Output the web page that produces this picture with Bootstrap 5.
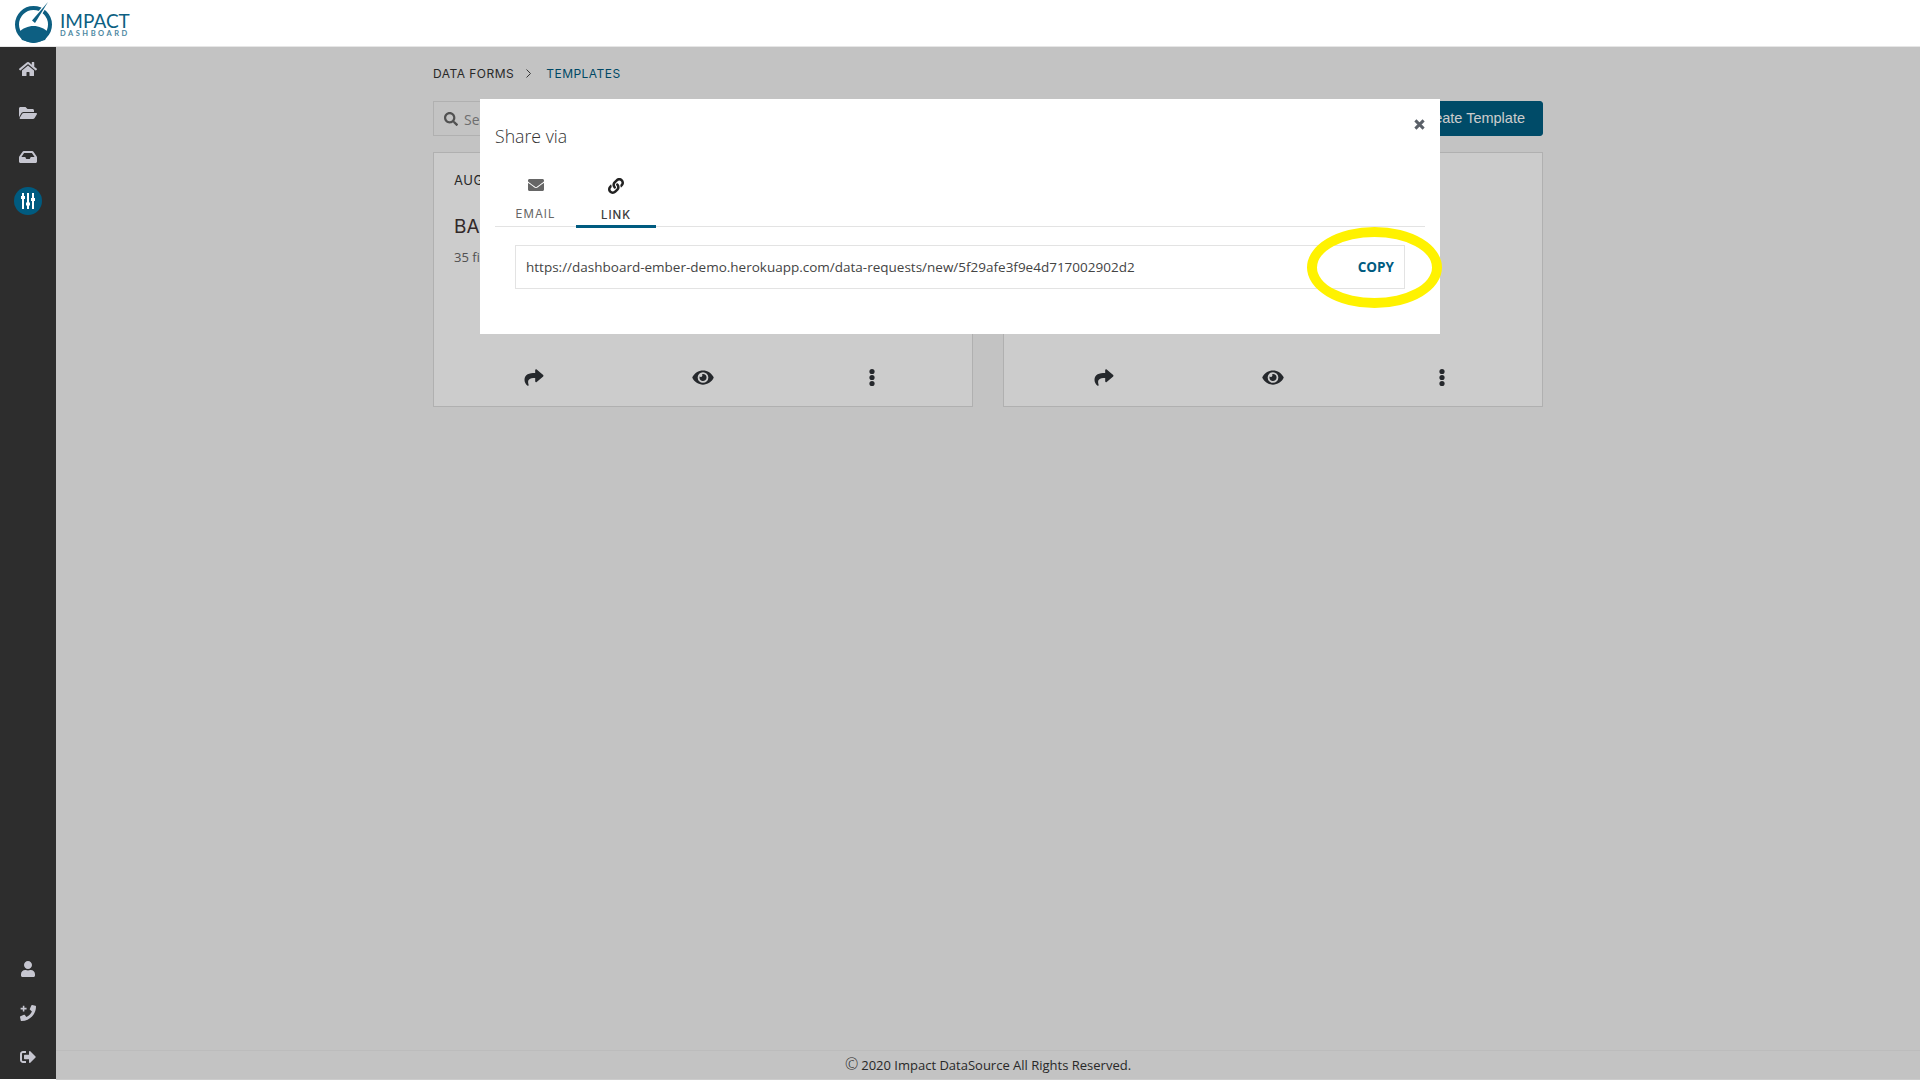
<!DOCTYPE html>
<html lang="en">
<head>
  <meta charset="UTF-8" />
  <title>Impact Dashboard</title>
  <link href="https://cdn.jsdelivr.net/npm/bootstrap@5.3.0/dist/css/bootstrap.min.css" rel="stylesheet" />
  <style>
    html, body { height: 100%; }
    body {
      background: #fff;
      font-family: "Open Sans", sans-serif;
      overflow: hidden;
    }
    .page-wrap { height: 1079px; }

    /* top bar */
    .top-bar {
      height: 47px;
      background: #fff;
      border-bottom: 1px solid #e6e6e6;
      padding-left: 14px;
    }
    .logo-mark { display: block; }
    .logo-name {
      font-family: Lato, sans-serif;
      color: #0d5f82;
      margin-left: 6px;
      margin-top: 3px;
    }
    .logo-big { font-size: 19px; line-height: 17px; }
    .logo-small { font-size: 7.5px; line-height: 9px; font-weight: 700; letter-spacing: 2.5px; color: #4c87a1; }

    /* side bar */
    .side-bar { width: 56px; background: #2d2d2d; }
    .side-link {
      width: 28px;
      height: 28px;
      margin-top: 8px;
      margin-bottom: 8px;
      color: #c6c6d0;
    }
    .side-link svg { width: 18px; height: 16px; fill: currentColor; }
    .side-link.is-on { background: #005b80; color: #fff; border-radius: 50%; }

    /* main area under the backdrop */
    .main-area { background: #f4f4f4; min-width: 0; }
    .main-inner { max-width: 1140px; padding: 0 15px; }
    .crumbs {
      font-family: Inter, sans-serif;
      font-size: 12px;
      letter-spacing: .48px;
      color: #333;
      height: 54px;
      padding-top: 18px;
    }
    .crumbs .crumb-on { color: #005b80; }
    .crumb-sep { width: 5px; height: 9px; margin: 0 15px 0 12px; }
    .search-box {
      width: 300px;
      height: 35px;
      border: 1px solid #dcdcdc;
      background: #f4f4f4;
      font-size: 14px;
      color: #8a8a8a;
      padding: 1px 0 0 10px;
    }
    .search-box svg { width: 14px; height: 14px; fill: #666; margin-right: 6px; }
    .btn-create {
      background: #005e83;
      border-color: #005e83;
      color: #fff;
      font-family: "Liberation Sans", sans-serif;
      font-size: 14.5px;
      height: 35px;
      width: 210px;
      padding: 0 17px 0 0;
      text-align: right;
      border-radius: 3px;
    }
    .tpl-row { gap: 30px; margin-top: 16px; }
    .tpl-card {
      width: 540px;
      height: 255px;
      background: #fff;
      border: 1px solid #dcdcdc;
      border-radius: 0;
      padding: 16px 20px 0;
      color: #333;
    }
    .tpl-date { font-family: Inter, sans-serif; font-size: 13px; font-weight: 400; letter-spacing: .6px; height: 44px; padding-top: 2px; }
    .tpl-name { font-family: Inter, sans-serif; font-size: 19px; font-weight: 400; color: #403434; }
    .tpl-count { font-size: 13px; color: #666; margin-top: 6px; }
    .tpl-actions { height: 50px; padding-bottom: 7px; margin: 0 -5px; }
    .tpl-actions span { width: 169px; display: flex; justify-content: center; }
    .tpl-actions svg { height: 19px; width: 22px; fill: #2f3237; }

    .site-foot {
      height: 29px;
      border-top: 1px solid #ebebeb;
      font-size: 13px;
      color: #333;
      padding-top: 2px;
    }
    .copy-mark { font-size: 16px; font-weight: 300; line-height: 1; margin-right: 3px; }

    /* dimmed layer and dialog */
    .dim-layer {
      position: absolute;
      top: 47px;
      left: 56px;
      right: 0;
      bottom: 0;
      background: rgba(0, 0, 0, .2);
    }
    .share-box {
      position: absolute;
      top: 99px;
      left: 480px;
      width: 960px;
      height: 235px;
      background: #fff;
      padding: 0 15px;
    }
    .share-title {
      font-size: 17.7px;
      font-weight: 300;
      color: #333;
      margin: 24px 0 0;
      line-height: 27px;
    }
    .share-close {
      position: absolute;
      top: 20px;
      right: 15px;
      width: 11px;
      height: 11px;
      border: 0;
      padding: 0;
      background: none;
      line-height: 0;
    }
    .share-close svg { width: 11px; height: 11px; stroke: #5a6068; stroke-width: 3.2; display: block; }
    .share-tabs { border-bottom: 1px solid #e3e3e3; margin-top: 19px; height: 58px; }
    .share-tab {
      width: 81px;
      height: 58px;
      font-family: Inter, sans-serif;
      font-size: 11.5px;
      letter-spacing: 1px;
      color: #666;
      text-decoration: none;
    }
    .share-tab svg { width: 16px; height: 16px; margin-bottom: 13px; fill: #666; }
    .share-tab.is-on { color: #3c3c3c; font-weight: 500; border-bottom: 3px solid #005b80; height: 59px; width: 80px; padding-bottom: 1px !important; }
    .share-tab.is-on svg { fill: #222; margin-bottom: 13px; }
    .link-row {
      height: 44px;
      margin: 18px 20px 0 20px;
      border: 1px solid #e3e3e3;
      font-size: 13.5px;
      color: #444;
      padding: 0 10px;
    }
    .copy-btn {
      font-size: 13.5px;
      font-weight: 700;
      color: #005b80;
      background: none;
      border: 0;
      padding: 0;
    }
    .copy-ring {
      position: absolute;
      top: 227px;
      left: 1307px;
      width: 135px;
      height: 81px;
      border: 10px solid #fff200;
      border-radius: 50%;
    }
  </style>
</head>
<body>

<div class="page-wrap d-flex flex-column">
  <header class="top-bar d-flex align-items-center flex-shrink-0">
    <svg class="logo-mark" width="40" height="46" viewBox="0 0 40 46">
      <circle cx="19.5" cy="24.5" r="16.5" fill="none" stroke="#0d5f82" stroke-width="4"/>
      <path d="M4 33 C9 28 14 26 19.5 26 S30 28 35 33 L31 40 L19.5 43 L8 40 Z" fill="#0d5f82"/>
      <path d="M18 20.5 L34 2 L21 23 Z" fill="#0d5f82" stroke="#fff" stroke-width="2.5" paint-order="stroke"/>
    </svg>
    <div class="logo-name">
      <div class="logo-big">IMPACT</div>
      <div class="logo-small">DASHBOARD</div>
    </div>
  </header>

  <div class="d-flex flex-grow-1">
    <aside class="side-bar d-flex flex-column align-items-center justify-content-between flex-shrink-0">
      <div class="d-flex flex-column align-items-center">
        <div class="side-link d-flex align-items-center justify-content-center">
          <svg viewBox="0 0 576 512"><path d="M280.37 148.26L96 300.11V464a16 16 0 0 0 16 16l112.06-.29a16 16 0 0 0 15.92-16V368a16 16 0 0 1 16-16h64a16 16 0 0 1 16 16v95.64a16 16 0 0 0 16 16.05L464 480a16 16 0 0 0 16-16V300L295.67 148.26a12.19 12.19 0 0 0-15.3 0zM571.6 251.47L488 182.56V44.05a12 12 0 0 0-12-12h-56a12 12 0 0 0-12 12v72.61L318.47 43a48 48 0 0 0-61 0L4.34 251.47a12 12 0 0 0-1.6 16.9l25.5 31A12 12 0 0 0 45.15 301l235.22-193.74a12.19 12.19 0 0 1 15.3 0L530.9 301a12 12 0 0 0 16.9-1.6l25.5-31a12 12 0 0 0-1.7-16.93z"/></svg>
        </div>
        <div class="side-link d-flex align-items-center justify-content-center">
          <svg viewBox="0 0 576 512"><path d="M572.694 292.093L500.27 416.248A63.997 63.997 0 0 1 444.989 448H45.025c-18.523 0-30.064-20.093-20.731-36.093l72.424-124.155A64 64 0 0 1 152 256h399.964c18.523 0 30.064 20.093 20.73 36.093zM152 224h328v-48c0-26.51-21.49-48-48-48H272l-64-64H48C21.49 64 0 85.49 0 112v278.046l69.077-118.418C86.214 242.25 117.989 224 152 224z"/></svg>
        </div>
        <div class="side-link d-flex align-items-center justify-content-center">
          <svg viewBox="0 0 576 512"><path d="M567.938 243.908L462.25 85.374A48.003 48.003 0 0 0 422.311 64H153.689a48 48 0 0 0-39.938 21.374L8.062 243.908A47.994 47.994 0 0 0 0 270.533V400c0 26.51 21.49 48 48 48h480c26.51 0 48-21.49 48-48V270.533a47.994 47.994 0 0 0-8.062-26.625zM162.252 128h251.497l85.333 128H376l-32 64H232l-32-64H76.918l85.334-128z"/></svg>
        </div>
        <div class="side-link is-on d-flex align-items-center justify-content-center">
          <svg viewBox="0 0 14 16"><path d="M1 0h2v3h1v3H3v10H1V6H0V3h1zM6 0h2v9.5h1v3H8V16H6v-3.5H5v-3h1zM11 0h2v5h1v3h-1v8h-2V8h-1V5h1z"/></svg>
        </div>
      </div>
      <div class="d-flex flex-column align-items-center">
        <div class="side-link d-flex align-items-center justify-content-center">
          <svg viewBox="0 0 448 512"><path d="M224 256c70.7 0 128-57.3 128-128S294.7 0 224 0 96 57.3 96 128s57.3 128 128 128zm89.6 32h-16.7c-22.2 10.2-46.9 16-72.9 16s-50.6-5.8-72.9-16h-16.7C60.2 288 0 348.2 0 422.4V464c0 26.5 21.5 48 48 48h352c26.5 0 48-21.5 48-48v-41.6c0-74.2-60.2-134.4-134.4-134.4z"/></svg>
        </div>
        <div class="side-link d-flex align-items-center justify-content-center">
          <svg viewBox="0 0 512 512"><path d="M493.4 24.6l-104-24c-11.3-2.6-22.9 3.3-27.5 13.9l-48 112c-4.2 9.8-1.4 21.3 6.9 28l60.6 49.6c-36 76.7-98.9 140.5-177.2 177.2l-49.6-60.6c-6.8-8.3-18.2-11.1-28-6.9l-112 48C3.9 366.5-2 378.1.6 389.4l24 104C27.1 504.2 36.7 512 48 512c256.1 0 464-207.5 464-464 0-11.2-7.7-20.9-18.6-23.4z"/><path d="M60 70h70V0h50v70h70v50h-70v70h-50v-70H60z" transform="translate(-40 20)"/></svg>
        </div>
        <div class="side-link d-flex align-items-center justify-content-center">
          <svg viewBox="0 0 512 512"><path d="M497 273L329 441c-15 15-41 4.5-41-17v-96H152c-13.3 0-24-10.7-24-24v-96c0-13.3 10.7-24 24-24h136V88c0-21.4 25.9-32 41-17l168 168c9.3 9.4 9.3 24.6 0 34zM192 436v-40c0-6.6-5.4-12-12-12H96c-17.7 0-32-14.3-32-32V160c0-17.7 14.3-32 32-32h84c6.6 0 12-5.4 12-12V76c0-6.6-5.4-12-12-12H96c-53 0-96 43-96 96v192c0 53 43 96 96 96h84c6.6 0 12-5.4 12-12z"/></svg>
        </div>
      </div>
    </aside>

    <main class="main-area flex-grow-1 d-flex flex-column">
      <div class="main-inner mx-auto w-100 flex-grow-1">
        <nav class="crumbs d-flex align-items-start">
          <span>DATA FORMS</span>
          <svg class="crumb-sep mt-1" viewBox="0 0 5 9"><path d="M.5.5l4 4-4 4" fill="none" stroke="#444" stroke-width="1"/></svg>
          <span class="crumb-on">TEMPLATES</span>
        </nav>
        <div class="d-flex justify-content-between">
          <div class="search-box d-flex align-items-center">
            <svg viewBox="0 0 512 512"><path d="M505 442.7L405.3 343c-4.5-4.5-10.6-7-17-7H372c27.6-35.3 44-79.7 44-128C416 93.1 322.9 0 208 0S0 93.1 0 208s93.1 208 208 208c48.3 0 92.7-16.4 128-44v16.3c0 6.4 2.5 12.5 7 17l99.7 99.7c9.4 9.4 24.6 9.4 33.9 0l28.3-28.3c9.4-9.4 9.4-24.6.1-34zM208 336c-70.7 0-128-57.2-128-128 0-70.7 57.2-128 128-128 70.7 0 128 57.2 128 128 0 70.7-57.2 128-128 128z"/></svg>
            Search
          </div>
          <button class="btn btn-create">Create Template</button>
        </div>
        <div class="tpl-row d-flex">
          <div class="card tpl-card">
            <div class="tpl-date">AUGUST</div>
            <div class="tpl-name">BASIC</div>
            <div class="tpl-count">35 fields</div>
            <div class="tpl-actions d-flex align-items-center mt-auto">
              <span><svg viewBox="0 0 512 512"><path d="M503.691 189.836L327.687 37.851C312.281 24.546 288 35.347 288 56.015v80.053C127.371 137.907 0 170.1 0 322.326c0 61.441 39.581 122.309 83.333 154.132 13.653 9.931 33.111-2.533 28.077-18.631C66.066 312.814 132.917 274.316 288 272.085V360c0 20.7 24.3 31.453 39.687 18.164l176.004-152c11.071-9.562 11.086-26.753 0-36.328z"/></svg></span>
              <span><svg viewBox="0 0 576 512"><path d="M572.52 241.4C518.29 135.59 410.93 64 288 64S57.68 135.64 3.48 241.41a32.35 32.35 0 0 0 0 29.19C57.71 376.41 165.07 448 288 448s230.32-71.64 284.52-177.41a32.35 32.35 0 0 0 0-29.19zM288 400a144 144 0 1 1 144-144 143.93 143.93 0 0 1-144 144zm0-240a95.31 95.31 0 0 0-25.31 3.79 47.85 47.85 0 0 1-66.9 66.9A95.78 95.78 0 1 0 288 160z"/></svg></span>
              <span><svg viewBox="0 0 22 19"><circle cx="11" cy="3.5" r="2.6"/><circle cx="11" cy="9.5" r="2.6"/><circle cx="11" cy="15.5" r="2.6"/></svg></span>
            </div>
          </div>
          <div class="card tpl-card">
            <div class="tpl-date">AUGUST</div>
            <div class="tpl-name">BASIC</div>
            <div class="tpl-count">35 fields</div>
            <div class="tpl-actions d-flex align-items-center mt-auto">
              <span><svg viewBox="0 0 512 512"><path d="M503.691 189.836L327.687 37.851C312.281 24.546 288 35.347 288 56.015v80.053C127.371 137.907 0 170.1 0 322.326c0 61.441 39.581 122.309 83.333 154.132 13.653 9.931 33.111-2.533 28.077-18.631C66.066 312.814 132.917 274.316 288 272.085V360c0 20.7 24.3 31.453 39.687 18.164l176.004-152c11.071-9.562 11.086-26.753 0-36.328z"/></svg></span>
              <span><svg viewBox="0 0 576 512"><path d="M572.52 241.4C518.29 135.59 410.93 64 288 64S57.68 135.64 3.48 241.41a32.35 32.35 0 0 0 0 29.19C57.71 376.41 165.07 448 288 448s230.32-71.64 284.52-177.41a32.35 32.35 0 0 0 0-29.19zM288 400a144 144 0 1 1 144-144 143.93 143.93 0 0 1-144 144zm0-240a95.31 95.31 0 0 0-25.31 3.79 47.85 47.85 0 0 1-66.9 66.9A95.78 95.78 0 1 0 288 160z"/></svg></span>
              <span><svg viewBox="0 0 22 19"><circle cx="11" cy="3.5" r="2.6"/><circle cx="11" cy="9.5" r="2.6"/><circle cx="11" cy="15.5" r="2.6"/></svg></span>
            </div>
          </div>
        </div>
      </div>
      <footer class="site-foot d-flex align-items-center justify-content-center">
        <span><span class="copy-mark">©</span>2020 Impact DataSource All Rights Reserved.</span>
      </footer>
    </main>
  </div>
</div>

<div class="dim-layer"></div>

<div class="share-box" role="dialog">
  <h5 class="share-title">Share via</h5>
  <button class="share-close" aria-label="Close"><svg viewBox="0 0 12 12"><path d="M1.5 1.5l9 9M10.5 1.5l-9 9"/></svg></button>
  <div class="share-tabs d-flex">
    <a class="share-tab d-flex flex-column align-items-center justify-content-end pb-1" href="#">
      <svg viewBox="0 0 512 512"><path d="M502.3 190.8c3.9-3.1 9.7-.2 9.7 4.7V400c0 26.5-21.5 48-48 48H48c-26.5 0-48-21.5-48-48V195.6c0-5 5.7-7.8 9.7-4.7 22.4 17.4 52.1 39.5 154.1 113.6 21.1 15.4 56.7 47.8 92.2 47.6 35.7.3 72-32.8 92.3-47.6 102-74.1 131.6-96.3 154-113.7zM256 320c23.2.4 56.6-29.2 73.4-41.4 132.7-96.3 142.8-104.7 173.4-128.7 5.8-4.5 9.2-11.5 9.2-18.9v-19c0-26.5-21.5-48-48-48H48C21.5 64 0 85.5 0 112v19c0 7.4 3.4 14.3 9.2 18.9 30.6 23.9 40.7 32.4 173.4 128.7 16.8 12.2 50.2 41.8 73.4 41.4z"/></svg>
      EMAIL
    </a>
    <a class="share-tab is-on d-flex flex-column align-items-center justify-content-end pb-1" href="#">
      <svg viewBox="0 0 512 512"><path d="M326.612 185.391c59.747 59.809 58.927 155.698.36 214.59-.11.12-.24.25-.36.37l-67.2 67.2c-59.27 59.27-155.699 59.262-214.96 0-59.27-59.26-59.27-155.7 0-214.96l37.106-37.106c9.84-9.84 26.786-3.3 27.294 10.606.648 17.722 3.826 35.527 9.69 52.721 1.986 5.822.567 12.262-3.783 16.612l-13.087 13.087c-28.026 28.026-28.905 73.66-1.155 101.96 28.024 28.579 74.086 28.749 102.325.51l67.2-67.19c28.191-28.191 28.073-73.757 0-101.83-3.701-3.694-7.429-6.564-10.341-8.569a16.037 16.037 0 0 1-6.947-12.606c-.396-10.567 3.348-21.456 11.698-29.806l21.054-21.055c5.521-5.521 14.182-6.199 20.584-1.731a152.482 152.482 0 0 1 20.522 17.197zM467.547 44.449c-59.261-59.262-155.69-59.27-214.96 0l-67.2 67.2c-.12.12-.25.25-.36.37-58.566 58.892-59.387 154.781.36 214.59a152.454 152.454 0 0 0 20.521 17.196c6.402 4.468 15.064 3.789 20.584-1.731l21.054-21.055c8.35-8.35 12.094-19.239 11.698-29.806a16.037 16.037 0 0 0-6.947-12.606c-2.912-2.005-6.64-4.875-10.341-8.569-28.073-28.073-28.191-73.639 0-101.83l67.2-67.19c28.239-28.239 74.3-28.069 102.325.51 27.75 28.3 26.872 73.934-1.155 101.96l-13.087 13.087c-4.35 4.35-5.769 10.79-3.783 16.612 5.864 17.194 9.042 34.999 9.69 52.721.509 13.906 17.454 20.446 27.294 10.606l37.106-37.106c59.271-59.259 59.271-155.699.001-214.959z"/></svg>
      LINK
    </a>
  </div>
  <div class="link-row d-flex align-items-center justify-content-between">
    <span>https://dashboard-ember-demo.herokuapp.com/data-requests/new/5f29afe3f9e4d717002902d2</span>
    <button class="copy-btn">COPY</button>
  </div>
</div>

<div class="copy-ring"></div>

<script src="https://cdn.jsdelivr.net/npm/bootstrap@5.3.0/dist/js/bootstrap.bundle.min.js"></script>
</body>
</html>
